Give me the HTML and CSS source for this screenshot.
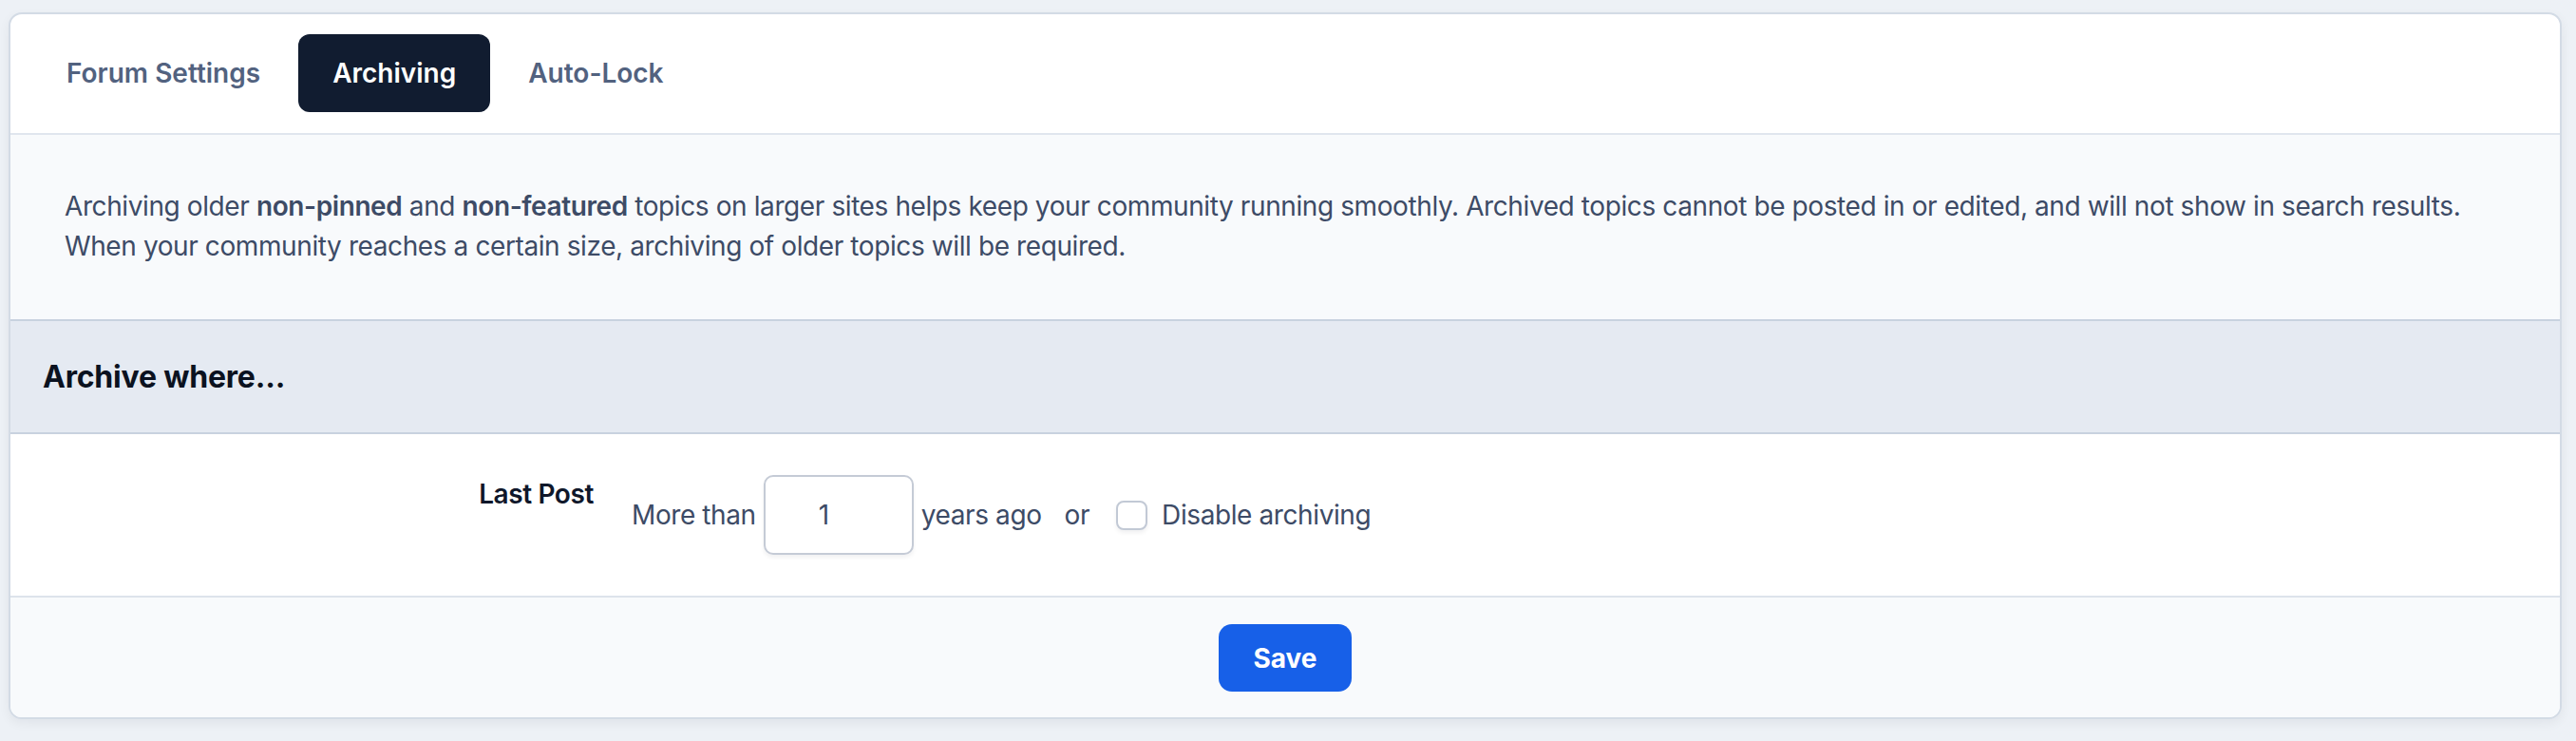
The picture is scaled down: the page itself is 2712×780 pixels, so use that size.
FILE: index.html
```html
<!DOCTYPE html>
<html lang="en">
<head>
<meta charset="UTF-8" />
<meta name="viewport" content="width=device-width, initial-scale=1" />
<title>Forum Settings - Archiving</title>
<link rel="stylesheet" href="styles.css">
</head>
<body>

<div class="card">
  <nav class="tabs">
    <a class="tab" href="#">Forum Settings</a>
    <a class="tab active" href="#">Archiving</a>
    <a class="tab" href="#">Auto-Lock</a>
  </nav>

  <p class="intro">Archiving older <b>non-pinned</b> and <b>non-featured</b> topics on larger sites helps keep your community running smoothly. Archived topics cannot be posted in or edited, and will not show in search results. When your community reaches a certain size, archiving of older topics will be required.</p>

  <h2 class="section-title">Archive where...</h2>

  <div class="field-row">
    <div class="field-label">Last Post</div>
    <div class="field-controls">
      <span>More than</span>
      <input class="num-input" type="text" value="1">
      <span>years ago</span>
      <span class="or">or</span>
      <label class="check">
        <input type="checkbox">
        <span>Disable archiving</span>
      </label>
    </div>
  </div>

  <div class="footer">
    <button class="save-btn">Save</button>
  </div>
</div>

</body>
</html>
```

FILE: styles.css
```css
body {
  margin: 0;
  padding: 13px 15px 30px 9px;
  background: #edf1f6;
  font-family: Inter, "Noto Sans", sans-serif;
  font-size: 28px;
  line-height: 42px;
  letter-spacing: -0.4px;
  color: #3d4b66;
}
.card {
  background: #fff;
  border: 2px solid #d3dbe5;
  border-radius: 14px;
  box-shadow: 0 4px 12px rgba(15, 23, 42, 0.06);
  overflow: hidden;
}
.tabs {
  display: flex;
  gap: 4px;
  padding: 21px 23px 22px;
  border-bottom: 2px solid #e0e6ee;
}
.tab {
  display: flex;
  align-items: center;
  height: 82px;
  padding: 0 36px;
  border-radius: 12px;
  font-weight: 600;
  letter-spacing: 0;
  color: #52627f;
  text-decoration: none;
}
.tab.active {
  background: #111c30;
  color: #fff;
}
.intro {
  margin: 0;
  background: #f8fafc;
  padding: 54px 57px 56px;
  border-bottom: 2px solid #c8d2df;
}
.intro b {
  font-weight: 600;
}
.section-title {
  margin: 0;
  padding: 37px 34px;
  background: #e5eaf2;
  border-bottom: 2px solid #c8d2df;
  font-size: 32px;
  line-height: 43px;
  font-weight: 700;
  letter-spacing: -0.2px;
  color: #0b1220;
}
.field-row {
  display: grid;
  grid-template-columns: 614px 1fr;
  column-gap: 40px;
  padding: 42px 0 43px;
}
.field-label {
  text-align: right;
  font-weight: 600;
  color: #0f172a;
}
.field-controls {
  display: flex;
  align-items: center;
  gap: 8px;
  margin-top: 1px;
}
.num-input {
  box-sizing: border-box;
  width: 158px;
  height: 84px;
  padding: 0 0 0 56px;
  border: 2px solid #c5cbd6;
  border-radius: 10px;
  box-shadow: 0 3px 4px rgba(15, 23, 42, 0.06);
  font: inherit;
  color: #3d4b66;
}
.or {
  margin: 0 20px 0 16px;
}
.check {
  display: flex;
  align-items: center;
  gap: 15px;
}
.check input {
  appearance: none;
  box-sizing: border-box;
  width: 33px;
  height: 31px;
  margin: 0;
  border: 2px solid #c2c9d5;
  border-radius: 8px;
  background: #fff;
  box-shadow: 0 3px 4px rgba(15, 23, 42, 0.06);
}
.footer {
  display: flex;
  justify-content: center;
  padding: 28px 0 27px;
  background: #f8fafc;
  border-top: 2px solid #dde3eb;
}
.save-btn {
  height: 71px;
  padding: 0 36px;
  border: none;
  border-radius: 14px;
  background: #1760e8;
  color: #fff;
  font: inherit;
  font-weight: 700;
  letter-spacing: 0;
  cursor: pointer;
}
```
